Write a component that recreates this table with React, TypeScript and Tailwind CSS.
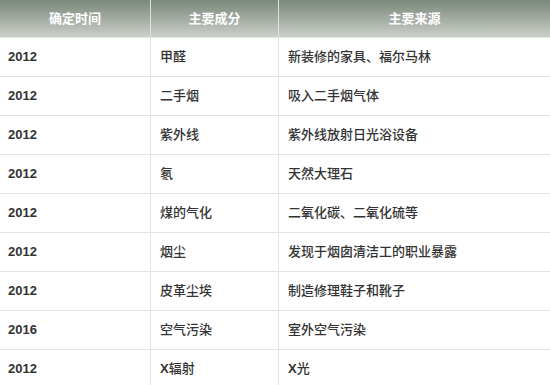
import React from "react";

const rows: [string, string, string][] = [
  ["2012", "甲醛", "新装修的家具、福尔马林"],
  ["2012", "二手烟", "吸入二手烟气体"],
  ["2012", "紫外线", "紫外线放射日光浴设备"],
  ["2012", "氡", "天然大理石"],
  ["2012", "煤的气化", "二氧化碳、二氧化硫等"],
  ["2012", "烟尘", "发现于烟囱清洁工的职业暴露"],
  ["2012", "皮革尘埃", "制造修理鞋子和靴子"],
  ["2016", "空气污染", "室外空气污染"],
  ["2012", "X辐射", "X光"],
];

function Txt({ s }: { s: string }) {
  if (s.startsWith("X")) {
    return (
      <span>
        <span className="font-bold">X</span>
        {s.slice(1)}
      </span>
    );
  }
  return <span>{s}</span>;
}

export default function App() {
  return (
    <div
      className="w-[550px] h-[385px] overflow-hidden bg-white text-[13px] text-[#333333]"
      style={{ fontFamily: '"Liberation Sans", "Noto Sans CJK SC", sans-serif' }}
    >
      <div className="grid grid-cols-[151px_128px_1fr] h-[38px] border-b border-[#e4e4e4] bg-gradient-to-b from-[#7b887a] to-[#cbd0ca] text-white font-bold">
        <div className="flex items-center justify-center border-r border-[#dfe3de]">确定时间</div>
        <div className="flex items-center justify-center border-r border-[#dfe3de]">主要成分</div>
        <div className="flex items-center justify-center">主要来源</div>
      </div>
      {rows.map((r, i) => (
        <div
          key={i}
          className="grid grid-cols-[151px_128px_1fr] h-[39px] border-b border-[#e2e2e2] font-medium"
        >
          <div className="flex items-center pl-2 border-r border-[#e2e2e2] font-bold">{r[0]}</div>
          <div className="flex items-center pl-[9px] border-r border-[#e2e2e2]">
            <Txt s={r[1]} />
          </div>
          <div className="flex items-center pl-[9px]">
            <Txt s={r[2]} />
          </div>
        </div>
      ))}
    </div>
  );
}
